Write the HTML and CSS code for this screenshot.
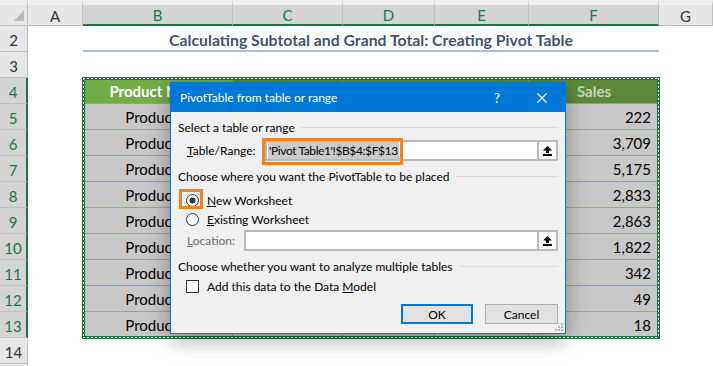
FILE: index.html
```html
<!DOCTYPE html>
<html lang="en">
  <head>
    <meta charset="UTF-8" />
    <meta name="viewport" content="width=device-width, initial-scale=1.0" />
    <title>Pivot Table</title>
    <link rel="stylesheet" href="styles.css">
  </head>
  <body>
    <div class="sheet">
      <!-- column headers -->
      <div class="corner">
        <svg width="10" height="11" viewBox="0 0 10 11"><polygon points="10,0 10,11 0,11" fill="#b7b7b7" /></svg>
      </div>
      <div class="col">A</div>
      <div class="col sel">B</div>
      <div class="col sel">C</div>
      <div class="col sel">D</div>
      <div class="col sel">E</div>
      <div class="col sel">F</div>
      <div class="col">G</div>

      <!-- row 2 -->
      <div class="rh">2</div>
      <div class="cell"></div>
      <div class="title">Calculating Subtotal and Grand Total: Creating Pivot Table</div>
      <div class="cell"></div>

      <!-- row 3 -->
      <div class="rh">3</div>
      <div class="cell wide"></div>

      <!-- row 4 -->
      <div class="rh sel">4</div>
      <div class="cell"></div>
      <div class="th active">Product Name</div>
      <div class="th"></div>
      <div class="th"></div>
      <div class="th"></div>
      <div class="th last">Sales</div>
      <div class="cell"></div>

      <div class="rh sel">5</div><div class="cell"></div>
      <div class="td c">Product 1</div><div class="td"></div><div class="td"></div><div class="td"></div>
      <div class="td num">222</div><div class="cell"></div>

      <div class="rh sel">6</div><div class="cell"></div>
      <div class="td c">Product 2</div><div class="td"></div><div class="td"></div><div class="td"></div>
      <div class="td num">3,709</div><div class="cell"></div>

      <div class="rh sel">7</div><div class="cell"></div>
      <div class="td c">Product 3</div><div class="td"></div><div class="td"></div><div class="td"></div>
      <div class="td num">5,175</div><div class="cell"></div>

      <div class="rh sel">8</div><div class="cell"></div>
      <div class="td c">Product 4</div><div class="td"></div><div class="td"></div><div class="td"></div>
      <div class="td num">2,833</div><div class="cell"></div>

      <div class="rh sel">9</div><div class="cell"></div>
      <div class="td c">Product 5</div><div class="td"></div><div class="td"></div><div class="td"></div>
      <div class="td num">2,863</div><div class="cell"></div>

      <div class="rh sel">10</div><div class="cell"></div>
      <div class="td c">Product 6</div><div class="td"></div><div class="td"></div><div class="td"></div>
      <div class="td num">1,822</div><div class="cell"></div>

      <div class="rh sel">11</div><div class="cell"></div>
      <div class="td c">Product 7</div><div class="td"></div><div class="td"></div><div class="td"></div>
      <div class="td num">342</div><div class="cell"></div>

      <div class="rh sel">12</div><div class="cell"></div>
      <div class="td c">Product 8</div><div class="td"></div><div class="td"></div><div class="td"></div>
      <div class="td num">49</div><div class="cell"></div>

      <div class="rh sel">13</div><div class="cell"></div>
      <div class="td c">Product 9</div><div class="td"></div><div class="td"></div><div class="td"></div>
      <div class="td num">18</div><div class="cell"></div>

      <div class="rh">14</div>
      <div class="cell wide"></div>
      <div class="rh"></div>
      <div class="cell wide"></div>

      <!-- copy marquee around B4:F13 -->
      <div class="ants"></div>
    </div>

    <div class="dlg">
      <div class="dlg-bar">
        <span class="dlg-title">PivotTable from table or range</span>
        <span class="dlg-help">?</span>
        <span class="dlg-close">
          <svg width="10" height="10" viewBox="0 0 10 10"><path d="M0.5 0.5 L9.5 9.5 M9.5 0.5 L0.5 9.5" stroke="#fff" stroke-width="1.1" /></svg>
        </span>
      </div>
      <div class="dlg-body">
        <div class="grp">Select a table or range</div>
        <div class="field range">
          <span class="lbl"><u>T</u>able/Range:</span>
          <div class="input">
            <div class="txt"><span class="hl">'Pivot Table1'!$B$4:$F$13</span></div>
            <div class="pick">
              <svg width="9" height="10" viewBox="0 0 9 10"><polygon points="4.5,0 9,4.5 6,4.5 6,7 3,7 3,4.5 0,4.5" fill="#000" /><rect x="0" y="8" width="9" height="2" fill="#000" /></svg>
            </div>
            <span class="mark-range"></span>
          </div>
        </div>

        <div class="grp g2">Choose where you want the PivotTable to be placed</div>
        <div class="opt first">
          <span class="mark-radio"></span>
          <svg width="13" height="13" viewBox="0 0 13 13"><circle cx="6.5" cy="6.5" r="6" fill="#fff" stroke="#333" /><circle cx="6.5" cy="6.5" r="3" fill="#333" /></svg>
          <span><u>N</u>ew Worksheet</span>
        </div>
        <div class="opt">
          <svg width="13" height="13" viewBox="0 0 13 13"><circle cx="6.5" cy="6.5" r="6" fill="#fff" stroke="#333" /></svg>
          <span><u>E</u>xisting Worksheet</span>
        </div>
        <div class="field loc">
          <span class="lbl off"><u>L</u>ocation:</span>
          <div class="input">
            <div class="txt"></div>
            <div class="pick">
              <svg width="9" height="10" viewBox="0 0 9 10"><polygon points="4.5,0 9,4.5 6,4.5 6,7 3,7 3,4.5 0,4.5" fill="#000" /><rect x="0" y="8" width="9" height="2" fill="#000" /></svg>
            </div>
          </div>
        </div>

        <div class="grp g2">Choose whether you want to analyze multiple tables</div>
        <div class="opt chk">
          <span class="box"></span>
          <span>Add this data to the Data <u>M</u>odel</span>
        </div>

        <div class="btns">
          <button class="btn ok">OK</button>
          <button class="btn">Cancel</button>
        </div>
      </div>
      <svg class="grip" width="8" height="8" viewBox="0 0 8 8">
        <rect x="6" y="0" width="2" height="2" fill="#b5b5b5" />
        <rect x="3" y="3" width="2" height="2" fill="#b5b5b5" />
        <rect x="6" y="3" width="2" height="2" fill="#b5b5b5" />
        <rect x="0" y="6" width="2" height="2" fill="#b5b5b5" />
        <rect x="3" y="6" width="2" height="2" fill="#b5b5b5" />
        <rect x="6" y="6" width="2" height="2" fill="#b5b5b5" />
      </svg>
    </div>
  </body>
</html>
```

FILE: styles.css
```css
* {
  margin: 0;
  padding: 0;
  box-sizing: border-box;
}
body {
  position: relative;
  width: 713px;
  height: 366px;
  overflow: hidden;
  background: #fff;
  font-family: Lato, "Liberation Sans", sans-serif;
  font-size: 15px;
  color: #000;
}

/* ---------- sheet ---------- */
.sheet {
  position: relative;
  display: grid;
  grid-template-columns: 28px 55px 150px 110px 92px 94px 130px 54px;
  grid-template-rows: 26px;
  grid-auto-rows: 26px;
}
.corner {
  display: flex;
  align-items: flex-end;
  justify-content: flex-end;
  padding: 0 3px 4px 0;
  background: #e6e6e6;
  border-top: 5px solid #eeeeee;
  border-right: 1px solid #bfbfbf;
  border-bottom: 1px solid #bfbfbf;
}
.col {
  display: flex;
  align-items: center;
  justify-content: center;
  background: #e6e6e6;
  border-top: 5px solid #eeeeee;
  border-right: 1px solid #bfbfbf;
  border-bottom: 1px solid #bfbfbf;
  color: #333;
  padding-top: 1px;
}
.col.sel {
  background: #d4d4d4;
  color: #217346;
  border-bottom: 2px solid #217346;
}
.rh {
  display: flex;
  align-items: flex-end;
  justify-content: center;
  padding-bottom: 2px;
  background: #e6e6e6;
  border-right: 1px solid #bfbfbf;
  border-bottom: 1px solid #bfbfbf;
  color: #333;
}
.rh.sel {
  background: #d4d4d4;
  color: #217346;
  border-right: 2px solid #217346;
}
.cell.wide {
  grid-column: 2 / -1;
}
.title {
  grid-column: 3 / 8;
  display: flex;
  align-items: flex-end;
  justify-content: center;
  padding-bottom: 1px;
  line-height: 18px;
  border-bottom: 2px solid #a9bde3;
  font-size: 15.8px;
  font-weight: 700;
  color: #44546a;
  white-space: nowrap;
}
.th {
  display: flex;
  align-items: center;
  justify-content: center;
  background: #5a8a39;
  color: #c9d2c1;
  font-weight: 700;
  border-right: 1px solid #7f9a68;
  border-bottom: 1px solid #93a97d;
  white-space: nowrap;
}
.th.active {
  background: #70ad47;
  color: #fff;
}
.th.last,
.td.num {
  border-right: none;
}
.td {
  display: flex;
  align-items: center;
  padding: 0 8px;
  background: #c8c8c8;
  border-right: 1px solid #93a97d;
  border-bottom: 1px solid #93a97d;
  white-space: nowrap;
}
.td.c {
  justify-content: center;
}
.td.num {
  justify-content: flex-end;
}
/* absolutely positioned grid child: sits on B4:F13 without taking cells */
.ants {
  position: absolute;
  grid-column: 3 / 8;
  grid-row: 4 / 14;
  inset: 0;
  pointer-events: none;
}
.ants::before {
  content: "";
  position: absolute;
  inset: -1px;
  border: 3px solid #217346;
}
.ants::after {
  content: "";
  position: absolute;
  inset: 0;
  background:
    repeating-linear-gradient(90deg, #fff 0 2px, transparent 2px 4px) left top / 100% 1px no-repeat,
    repeating-linear-gradient(90deg, #fff 0 2px, transparent 2px 4px) left bottom / 100% 1px no-repeat,
    repeating-linear-gradient(180deg, #fff 0 2px, transparent 2px 4px) left top / 1px 100% no-repeat,
    repeating-linear-gradient(180deg, #fff 0 2px, transparent 2px 4px) right top / 1px 100% no-repeat;
}

/* ---------- dialog ---------- */
.dlg {
  position: absolute;
  left: 170px;
  top: 82px;
  width: 396px;
  height: 252px;
  background: #f0f0f0;
  border: 1px solid #0078d7;
  box-shadow: 0 6px 20px rgba(0, 0, 0, 0.35);
  font-family: "Segoe UI", Lato, sans-serif;
  font-size: 12px;
  color: #000;
  z-index: 2;
}
.dlg-bar {
  display: flex;
  align-items: center;
  height: 29px;
  background: #0078d7;
  color: #fff;
}
.dlg-title {
  padding-left: 9px;
  flex: 1;
}
.dlg-help {
  width: 44px;
  text-align: center;
  font-size: 13px;
}
.dlg-close {
  width: 46px;
  height: 29px;
  display: grid;
  place-items: center;
}
.dlg-close svg {
  display: block;
}
.dlg-body {
  display: flex;
  flex-direction: column;
  padding: 7px 7px 9px 7px;
}
.grp {
  display: flex;
  align-items: center;
  gap: 6px;
  height: 16px;
  white-space: nowrap;
}
.grp::after {
  content: "";
  flex: 1;
  border-top: 1px solid #dadada;
}
.grp.g2 {
  margin-top: 7px;
}
.field {
  display: flex;
  align-items: center;
  height: 21px;
  padding-left: 9px;
}
.field.range {
  margin-top: 5px;
}
.field.range .lbl {
  width: 78px;
}
.field.loc {
  margin-top: 3px;
}
.field.loc .lbl {
  width: 57px;
}
.lbl.off {
  color: #6d6d6d;
}
.input {
  position: relative;
  flex: 1;
  display: flex;
  height: 21px;
  background: #fff;
  border: 2px solid #b9b9b9;
}
.input .txt {
  flex: 1;
  display: flex;
  align-items: center;
  padding-left: 1px;
  white-space: nowrap;
}
.hl {
  background: #cbcbcb;
  line-height: 17px;
  padding: 0 1px;
  letter-spacing: -0.4px;
}
.pick {
  width: 19px;
  display: grid;
  place-items: center;
  border-left: 2px solid #b9b9b9;
  background: #fbfbfb;
}
.pick svg {
  display: block;
}
.mark-range {
  position: absolute;
  left: -5px;
  top: -4px;
  width: 141px;
  height: 27px;
  border: 3px solid #f58220;
}
.opt {
  position: relative;
  display: flex;
  align-items: center;
  gap: 8px;
  height: 16px;
  margin-top: 3px;
  padding-left: 8px;
}
.opt.first {
  margin-top: 8px;
}
.opt svg {
  display: block;
}
.mark-radio {
  position: absolute;
  left: 1px;
  top: -3px;
  width: 24px;
  height: 20px;
  border: 3px solid #f58220;
}
.opt.chk {
  margin-top: 4px;
}
.box {
  width: 13px;
  height: 13px;
  background: #fff;
  border: 1px solid #333;
}
.btns {
  display: flex;
  justify-content: flex-end;
  gap: 12px;
  margin-top: 10px;
}
.btn {
  width: 73px;
  height: 20px;
  background: #e1e1e1;
  border: 1px solid #adadad;
  font: inherit;
  color: #000;
}
.btn.ok {
  width: 72px;
  border: 2px solid #0078d7;
}
.grip {
  position: absolute;
  right: 2px;
  bottom: 2px;
}
```
